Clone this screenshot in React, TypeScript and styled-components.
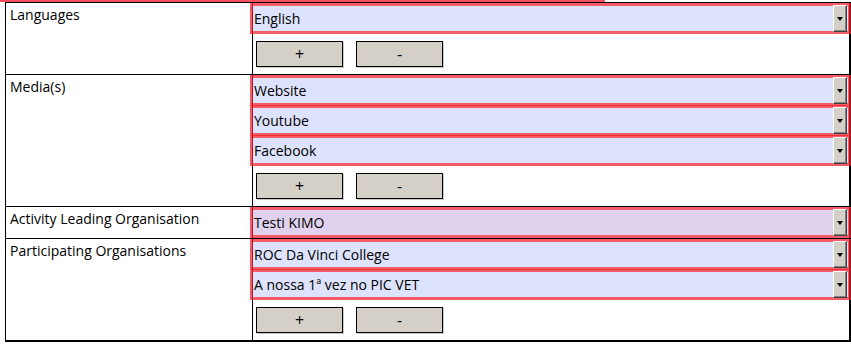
import React from 'react'
import styled, { createGlobalStyle } from 'styled-components'

const GlobalStyle = createGlobalStyle`
  body {
    margin: 0;
    background: #ffffff;
    font-family: "Open Sans", "Liberation Sans", sans-serif;
    color: #000;
  }
`

const Page = styled.div`
  width: 851px;
  height: 344px;
  overflow: hidden;
`

// bottom edge of the field above this section
const TopEdge = styled.div`
  width: 605px;
  height: 2px;
  background: #f4505c;
`

const Table = styled.div`
  margin-left: 5px;
  width: 843px;
  border: 1px solid #000;
  border-right-width: 2px;
  border-bottom-width: 2px;
`

const Row = styled.div`
  display: grid;
  grid-template-columns: 247px 1fr;
  border-bottom: 1px solid #000;
  &:last-child {
    border-bottom: none;
  }
`

const Label = styled.div`
  border-right: 1px solid #000;
  padding: 2px 4px;
  font-size: 14px;
  line-height: 20px;
`

const Cell = styled.div<{ $pad?: boolean }>`
  display: flex;
  flex-direction: column;
  margin-left: -3px;
  margin-right: -2px;
  padding-bottom: ${(p) => (p.$pad ? '7px' : '0')};
`

const Field = styled.div<{ $lead?: boolean }>`
  display: flex;
  align-items: center;
  height: 31px;
  box-sizing: border-box;
  border: 3px solid rgba(240, 30, 45, 0.72);
  background: ${(p) => (p.$lead ? '#e0d2ee' : '#dde3fc')};
  background-clip: padding-box;
  & + & {
    margin-top: -1px;
  }
`

const FieldText = styled.span`
  flex: 1;
  padding-left: 1px;
  font-size: 14px;
  white-space: nowrap;
`

const Arrow = styled.div`
  width: 12px;
  align-self: stretch;
  margin: -1px 1px -1px 0;
  background: #d4d0c8;
  border: 1px solid;
  border-color: #ffffff #404040 #404040 #ffffff;
  box-shadow: inset -1px -1px 0 #808080;
  display: flex;
  align-items: center;
  justify-content: center;
  &::after {
    content: '';
    border-left: 3px solid transparent;
    border-right: 3px solid transparent;
    border-top: 4px solid #000;
    margin-top: 1px;
  }
`

const Buttons = styled.div`
  display: flex;
  gap: 13px;
  margin: 7px 0 0 6px;
`

const Button = styled.button`
  width: 87px;
  height: 26px;
  padding: 0;
  background: #d4d0c8;
  border: 1px solid #000;
  box-shadow: 1px 1px 0 #c8c8c8;
  font-family: "Open Sans", "Liberation Sans", sans-serif;
  font-size: 16px;
  line-height: 1;
  color: #000;
`

type Group = { label: string; values: string[]; lead?: boolean; buttons?: boolean }

const groups: Group[] = [
  { label: 'Languages', values: ['English'], buttons: true },
  { label: 'Media(s)', values: ['Website', 'Youtube', 'Facebook'], buttons: true },
  { label: 'Activity Leading Organisation', values: ['Testi KIMO'], lead: true },
  { label: 'Participating Organisations', values: ['ROC Da Vinci College', 'A nossa 1ª vez no PIC VET'], buttons: true },
]

const App = () => (
  <Page>
    <GlobalStyle />
    <TopEdge />
    <Table>
      {groups.map((g) => (
        <Row key={g.label}>
          <Label>{g.label}</Label>
          <Cell $pad={g.buttons}>
            {g.values.map((v) => (
              <Field key={v} $lead={g.lead}>
                <FieldText>{v}</FieldText>
                <Arrow />
              </Field>
            ))}
            {g.buttons && (
              <Buttons>
                <Button>+</Button>
                <Button>-</Button>
              </Buttons>
            )}
          </Cell>
        </Row>
      ))}
    </Table>
  </Page>
)

export default App
